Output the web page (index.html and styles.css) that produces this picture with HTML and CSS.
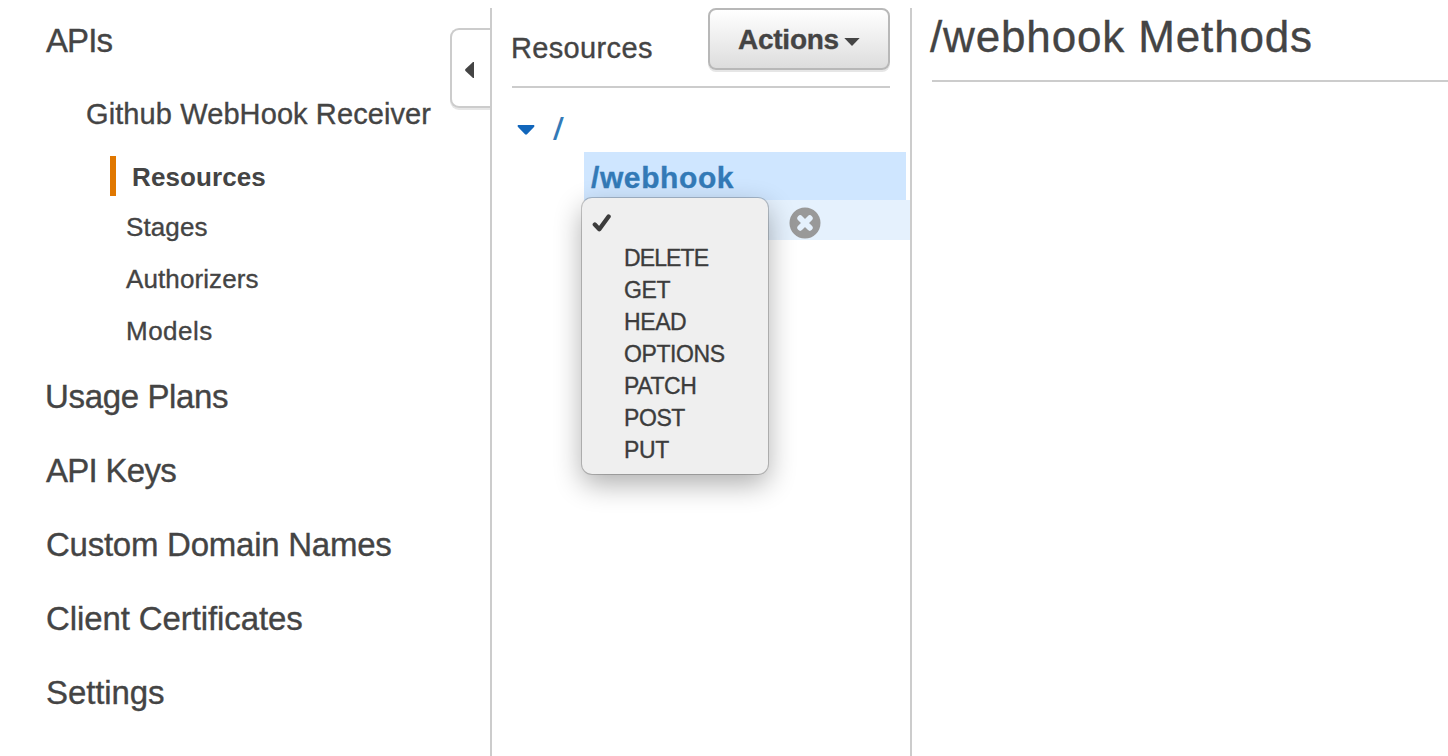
FILE: index.html
```html
<!DOCTYPE html>
<html lang="en">
<head>
<meta charset="utf-8">
<title>API Gateway</title>
<link rel="stylesheet" href="styles.css">
</head>
<body>
<div class="app">
  <nav class="sidebar">
    <a class="nav-item nav-apis">APIs</a>
    <a class="nav-api">Github WebHook Receiver</a>
    <div class="nav-sub">
      <a class="sub-item active">Resources</a>
      <a class="sub-item">Stages</a>
      <a class="sub-item authorizers">Authorizers</a>
      <a class="sub-item models">Models</a>
    </div>
    <a class="nav-item usage">Usage Plans</a>
    <a class="nav-item keys">API Keys</a>
    <a class="nav-item domains">Custom Domain Names</a>
    <a class="nav-item">Client Certificates</a>
    <a class="nav-item">Settings</a>
    <button class="collapse" aria-label="Collapse">
      <svg width="10" height="16" viewBox="0 0 10 16"><path d="M9 0V16L8 16L0.5 9Q-.3 8 .5 7L8 0Z" fill="#444"/></svg>
    </button>
  </nav>
  <section class="resources">
    <header class="res-head">
      <h2 class="res-title">Resources</h2>
      <button class="actions"><span class="actions-label">Actions</span><svg width="16" height="8" viewBox="0 0 16 8"><path d="M.3 0H15.700L8 8Z" fill="#444"/></svg></button>
    </header>
    <div class="tree">
      <div class="root-row">
        <svg width="18" height="10" viewBox="0 0 18 10"><path d="M1 0H17Q18 1 17 2L10 9.300Q9 10 8 9.300L1 2Q0 1 1 0Z" fill="#16b"/></svg>
        <span class="slash">/</span>
      </div>
      <div class="selected">/webhook</div>
      <div class="method-row">
        <svg class="cancel" width="32" height="32" viewBox="0 0 32 32"><circle cx="16" cy="16" r="15.500" fill="#999"/><path d="M11.200 11.200L20.800 20.800M20.800 11.200L11.200 20.800" stroke="#e5f1fd" stroke-width="5.800" stroke-linecap="round"/></svg>
        <ul class="menu">
          <li class="checked"><svg width="20" height="20" viewBox="0 0 20 20"><path d="M2.800 11.500L7.300 16.300L16.600 3.500" fill="none" stroke="#3c3c3c" stroke-width="4.300" stroke-linecap="round" stroke-linejoin="round"/></svg></li>
          <li class="delete">DELETE</li>
          <li>GET</li>
          <li>HEAD</li>
          <li>OPTIONS</li>
          <li>PATCH</li>
          <li>POST</li>
          <li>PUT</li>
        </ul>
      </div>
    </div>
  </section>
  <main class="methods">
    <h1 class="methods-title">/webhook Methods</h1>
  </main>
</div>
</body>
</html>
```
FILE: styles.css
```css
* { box-sizing: border-box; }
body {
  margin: 0;
  background: #fff;
  color: #444;
  font-family: "Liberation Sans", Arial, sans-serif;
  -webkit-text-stroke: 0.35px currentColor;
  overflow: hidden;
}
.app { display: flex; height: 756px; }
.sidebar {
  position: relative;
  width: 490px;
  flex: none;
  padding-top: 4px;
  display: flex;
  flex-direction: column;
}
.nav-item {
  padding-left: 46px;
  font-size: 33px;
  line-height: 74px;
  letter-spacing: -0.1px;
}
.nav-apis { letter-spacing: -0.9px; }
.usage { padding-left: 45px; letter-spacing: -0.35px; }
.keys { letter-spacing: -0.7px; }
.domains { letter-spacing: -0.25px; }
.nav-api {
  padding-left: 86px;
  font-size: 29px;
  line-height: 72px;
  letter-spacing: 0.1px;
}
.nav-sub {
  display: flex;
  flex-direction: column;
  padding: 6px 0 3px 110px;
}
.sub-item {
  padding-left: 16px;
  font-size: 26px;
  line-height: 52px;
  letter-spacing: 0.1px;
}
.models { letter-spacing: 0.5px; }
.active {
  height: 40px;
  margin-bottom: 5px;
  border-left: 6px solid #e07700;
  font-weight: bold;
  line-height: 42px;
  -webkit-text-stroke-width: 0;
}
.collapse {
  position: absolute;
  left: 450px;
  top: 28px;
  width: 40px;
  height: 80px;
  padding: 3px 0 0 13px;
  display: flex;
  align-items: center;
  border: 2px solid #ccc;
  border-right: 0;
  border-radius: 9px 0 0 9px;
  background: #fff;
  box-shadow: 0 2px 0 #e6e6e6;
}
.resources {
  width: 422px;
  flex: none;
  margin-top: 8px;
  border-left: 2px solid #ccc;
  border-right: 2px solid #ccc;
}
.res-head {
  display: flex;
  justify-content: space-between;
  height: 80px;
  margin: 0 20px;
  border-bottom: 2px solid #ccc;
}
.res-title {
  margin: 0 0 0 -1px;
  font-size: 29px;
  font-weight: normal;
  line-height: 80px;
  letter-spacing: 0.35px;
}
.actions {
  display: flex;
  align-items: center;
  gap: 5px;
  width: 182px;
  height: 62px;
  padding: 2px 0 0 28px;
  border: 2px solid #b8b8b8;
  border-radius: 8px;
  background: linear-gradient(#fff, #ddd);
  box-shadow: 0 2px 0 #e6e6e6;
  color: #444;
  font: bold 28px "Liberation Sans", Arial, sans-serif;
}
.actions svg { margin-top: 4px; }
.actions-label { letter-spacing: -0.25px; line-height: 58px; }
.root-row {
  display: flex;
  align-items: center;
  height: 64px;
  padding: 0 0 0 25px;
  gap: 19px;
}
.root-row svg { margin-top: 20px; }
.slash {
  font-size: 31px;
  line-height: 32px;
  margin-top: 20px;
  color: #337ab7;
  transform: scaleX(1.25);
  -webkit-text-stroke-width: 0;
}
.selected {
  height: 48px;
  margin: 0 4px 0 92px;
  padding-left: 7px;
  background: #cfe6ff;
  color: #337ab7;
  font-size: 30px;
  font-weight: bold;
  line-height: 51px;
  letter-spacing: 0.6px;
}
.method-row {
  position: relative;
  height: 40px;
  margin-left: 92px;
  padding: 7px 0 0 205px;
  background: #e5f1fd;
}
.cancel { display: block; }
.menu {
  position: absolute;
  left: -2px;
  top: -2px;
  width: 186px;
  height: 276px;
  margin: 0;
  padding: 0;
  list-style: none;
  border-radius: 10px;
  background: #efefef;
  box-shadow: 0 0 0 1px rgba(0,0,0,.2), 0 10px 28px rgba(0,0,0,.32);
  color: #3c3c3c;
  font-size: 23px;
  line-height: 32px;
}
.menu li { padding-left: 42px; height: 32px; letter-spacing: -0.4px; }
.menu .delete { letter-spacing: -0.9px; }
.menu .checked { height: 44px; padding: 15px 0 0 10px; line-height: 0; }
.methods { flex: 1; padding-left: 20px; }
.methods-title {
  height: 82px;
  margin: 0;
  border-bottom: 2px solid #ccc;
  font-size: 44px;
  font-weight: normal;
  line-height: 74px;
  letter-spacing: 0.85px;
  text-indent: -2px;
}
```
